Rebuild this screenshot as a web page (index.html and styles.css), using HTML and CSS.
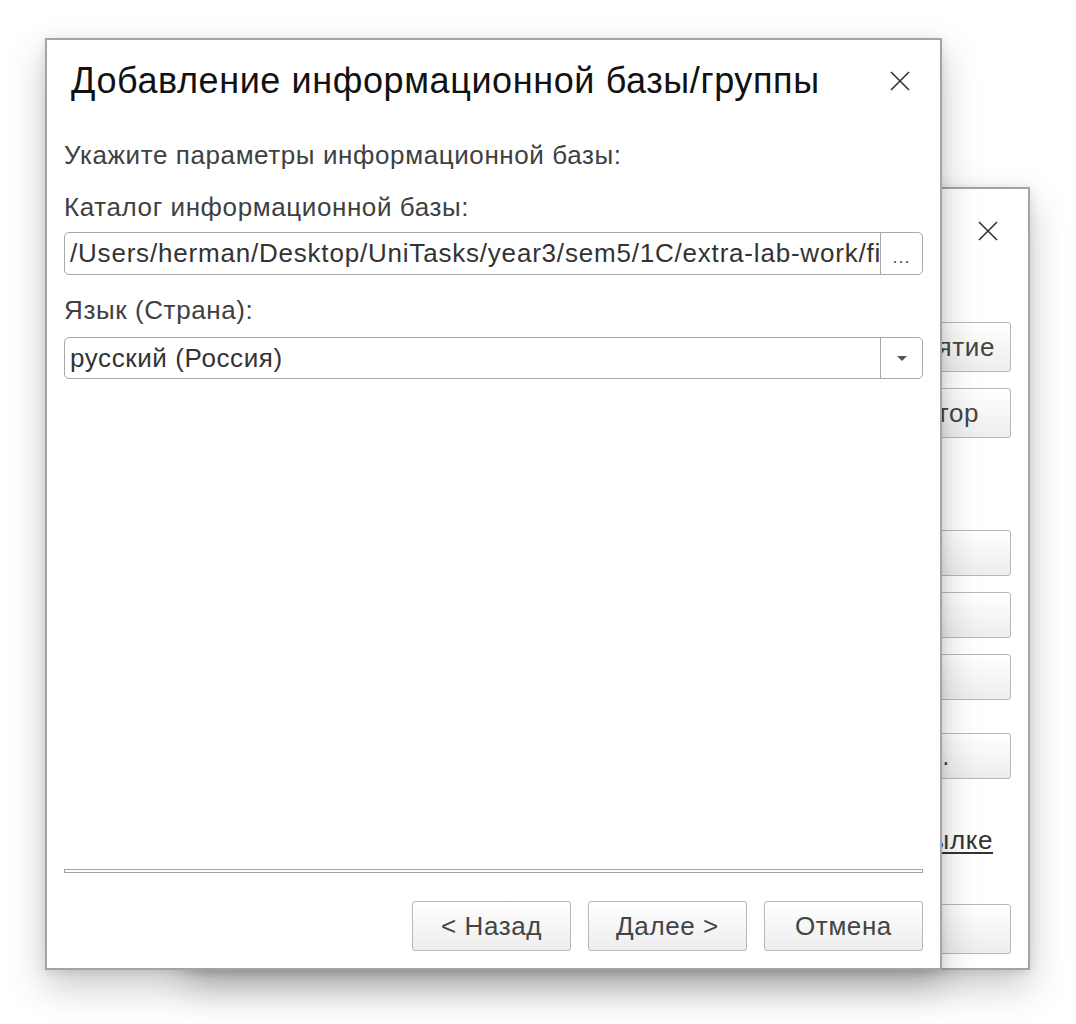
FILE: index.html
```html
<!DOCTYPE html>
<html lang="ru">
<head>
<meta charset="utf-8">
<title>Добавление информационной базы/группы</title>
<link rel="stylesheet" href="styles.css">
</head>
<body>
<div class="stage">
  <div class="win back">
    <div class="back-head">
      <svg class="x-icon" viewBox="0 0 20 20"><path d="M1 1L19 19M19 1L1 19"/></svg>
    </div>
    <div class="back-col">
      <button class="bbtn tall first r15">1С:Предприятие</button>
      <button class="bbtn tall gap16 r31">Конфигуратор</button>
      <button class="bbtn g93 hid">Добавить...</button>
      <button class="bbtn gap16 hid">Изменить...</button>
      <button class="bbtn gap16 hid">Удалить...</button>
      <button class="bbtn g33 r63">Настройка...</button>
      <div class="link-row"><a class="blink">Подробнее о ссылке</a></div>
      <button class="bbtn tall hid">Выход</button>
    </div>
  </div>

  <div class="win front">
    <div class="head">
      <div class="title">Добавление информационной базы/группы</div>
      <svg class="x-icon" viewBox="0 0 20 20"><path d="M1 1L19 19M19 1L1 19"/></svg>
    </div>
    <div class="body">
      <div class="hint">Укажите параметры информационной базы:</div>
      <div class="label l1">Каталог информационной базы:</div>
      <div class="field f1">
        <div class="field-text path">/Users/herman/Desktop/UniTasks/year3/sem5/1C/extra-lab-work/file-base</div>
        <div class="field-btn dots">...</div>
      </div>
      <div class="label l2">Язык (Страна):</div>
      <div class="field f2">
        <div class="field-text">русский (Россия)</div>
        <div class="field-btn"><span class="tri"></span></div>
      </div>
      <div class="spacer"></div>
      <div class="sep"></div>
      <div class="footer">
        <button class="btn">&lt; Назад</button>
        <button class="btn">Далее &gt;</button>
        <button class="btn">Отмена</button>
      </div>
    </div>
  </div>
</div>
</body>
</html>
```

FILE: styles.css
```css
* { box-sizing: border-box; }
html, body { margin: 0; padding: 0; background: #ffffff; }
body { font-family: "Liberation Sans", Arial, sans-serif; color: #333; }

.stage { position: relative; width: 1076px; height: 1024px; overflow: hidden; background: #fff; }

.win {
  position: absolute;
  background: #fff;
  border: 2px solid #a4a4a4;
  box-shadow: 0 16px 36px rgba(0,0,0,0.22), 0 2px 10px rgba(0,0,0,0.10);
}

/* back window (mostly hidden behind the dialog) */
.back {
  left: 187px; top: 187px; width: 843px; height: 783px;
  display: flex; flex-direction: column; align-items: flex-end;
  padding-right: 17px;
}
.back-head {
  height: 86px; width: 100%;
  display: flex; justify-content: flex-end; align-items: flex-start;
  padding-top: 32px; padding-right: 13px;
}
.x-icon { width: 20px; height: 20px; fill: none; stroke: #333; stroke-width: 1.6; flex: none; }
.back-col { width: 260px; display: flex; flex-direction: column; }
.bbtn {
  height: 46px;
  border: 1px solid #b8b8b8;
  border-radius: 3px;
  background: linear-gradient(#ffffff, #ededed);
  font-family: "Liberation Sans", Arial, sans-serif;
  font-size: 26px;
  letter-spacing: 0.6px;
  color: #444;
  padding: 0;
  text-align: right;
  white-space: nowrap;
  overflow: hidden;
}
.bbtn.tall { height: 50px; }
.bbtn.first { margin-top: 47px; }
.bbtn.gap16 { margin-top: 16px; }
.bbtn.g93 { margin-top: 92px; }
.bbtn.g33 { margin-top: 33px; }
.bbtn.r15 { padding-right: 15px; }
.bbtn.r31 { padding-right: 31px; }
.bbtn.r63 { padding-right: 60px; }
.bbtn.hid { text-align: left; padding-left: 14px; font-size: 22px; }
.link-row {
  height: 125px;
  display: flex; justify-content: flex-end; align-items: flex-start;
  padding-top: 46px; padding-right: 18px;
  white-space: nowrap;
}
.blink { font-size: 26px; letter-spacing: 0.6px; color: #333; text-decoration: underline; text-underline-offset: 3px; }

/* front dialog */
.front { left: 45px; top: 38px; width: 897px; height: 932px; display: flex; flex-direction: column; }
.head {
  height: 86px;
  display: flex; align-items: center; justify-content: space-between;
  padding: 0 30px 4px 24px;
}
.title { font-size: 36px; letter-spacing: 0.6px; color: #111; white-space: nowrap; }
.body { flex: 1; display: flex; flex-direction: column; padding: 0 17px 17px 17px; }
.hint, .label { font-size: 26px; letter-spacing: 0.6px; color: #404040; line-height: 28px; white-space: nowrap; }
.hint { margin-top: 15px; }
.label.l1 { margin-top: 24px; }
.label.l2 { margin-top: 21px; }
.field {
  height: 43px;
  border: 1px solid #a8a8a8;
  border-radius: 5px;
  display: flex;
  overflow: hidden;
}
.field.f1 { margin-top: 11px; }
.field.f2 { margin-top: 13px; height: 42px; }
.field-text {
  flex: 1;
  font-size: 26px; letter-spacing: 0.6px; color: #333;
  padding: 0 3px 0 5px;
  line-height: 40px;
  white-space: nowrap; overflow: hidden;
}
.field-text.path { letter-spacing: 0.8px; }
.field-btn {
  width: 42px; flex: none;
  border-left: 1px solid #a8a8a8;
  display: flex; align-items: center; justify-content: center;
}
.dots { font-size: 18px; color: #555; letter-spacing: 1px; padding-top: 8px; }
.tri { width: 0; height: 0; border-left: 5px solid transparent; border-right: 5px solid transparent; border-top: 5px solid #555; }
.spacer { flex: 1; }
.sep { height: 4px; border: 1px solid #a4a4a4; background: #fff; }
.footer { margin-top: 28px; display: flex; justify-content: flex-end; gap: 17px; }
.btn {
  width: 159px;
  height: 50px;
  border: 1px solid #b8b8b8;
  border-radius: 3px;
  background: linear-gradient(#ffffff, #ededed);
  font-family: "Liberation Sans", Arial, sans-serif;
  font-size: 26px;
  letter-spacing: 0.6px;
  color: #444;
  padding: 0;
}
```
